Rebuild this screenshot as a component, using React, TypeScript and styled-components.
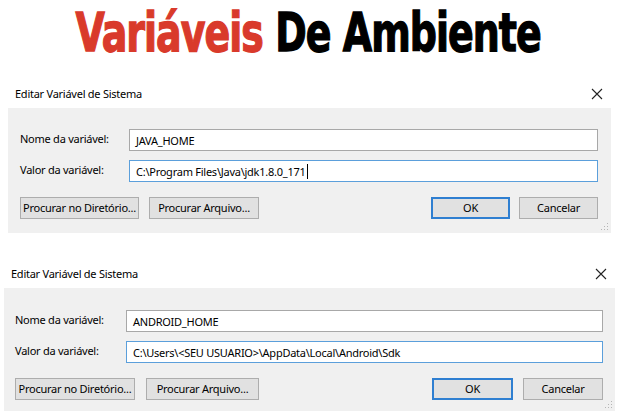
import styled, { createGlobalStyle } from 'styled-components'

const GlobalStyle = createGlobalStyle`
  html, body {
    margin: 0;
    padding: 0;
    background: #ffffff;
  }
  body {
    width: 625px;
    height: 419px;
    overflow: hidden;
    font-family: 'Noto Sans', 'Open Sans', sans-serif;
    color: #000;
  }
`

const Page = styled.div`
  display: flex;
  flex-direction: column;
  width: 625px;
`

const Header = styled.h1`
  margin: 0;
  height: 79px;
  display: flex;
  justify-content: center;
  align-items: flex-start;
  padding-right: 8px;
  box-sizing: border-box;
  overflow: visible;
`

const Headline = styled.span`
  display: inline-block;
  font-family: 'DejaVu Sans Condensed', 'DejaVu Sans', sans-serif;
  font-weight: 700;
  font-size: 54px;
  line-height: 64px;
  letter-spacing: -1.2px;
  white-space: nowrap;
  transform-origin: center center;
  transform: scaleX(0.78);
  margin-top: 1px;
  -webkit-text-stroke: 1.3px currentColor;
`

const Red = styled.span`
  color: #d93a2b;
`

const Dialog = styled.section<{ $left: number; $right: number }>`
  display: flex;
  flex-direction: column;
  margin: 0 ${(p) => p.$right}px 0 ${(p) => p.$left}px;
`

const TitleBar = styled.div<{ $height: number }>`
  height: ${(p) => p.$height}px;
  display: flex;
  align-items: center;
  justify-content: space-between;
  padding: 0 7px 0 7px;
  font-size: 11px;
  letter-spacing: -0.25px;
  color: #000;
`

const CloseButton = styled.span`
  display: flex;
  width: 14px;
  height: 14px;
  align-items: center;
  justify-content: center;
`

const Panel = styled.div<{ $pad: string }>`
  background: #f0f0f0;
  padding: ${(p) => p.$pad};
  display: flex;
  flex-direction: column;
  position: relative;
`

const Fields = styled.div<{ $labelCol: number }>`
  display: grid;
  grid-template-columns: ${(p) => p.$labelCol}px 1fr;
  row-gap: 9px;
  align-items: center;
`

const Label = styled.label`
  font-size: 11px;
  letter-spacing: -0.25px;
  padding-bottom: 4px;
  white-space: nowrap;
`

const Field = styled.div<{ $focused?: boolean }>`
  height: 22px;
  box-sizing: border-box;
  background: #ffffff;
  border: 1px solid ${(p) => (p.$focused ? '#5b9fdb' : '#a8a8a8')};
  display: flex;
  align-items: center;
  padding: 0 6px;
  font-size: 11px;
  letter-spacing: -0.25px;
  white-space: nowrap;
  overflow: hidden;
`

const Caret = styled.span`
  display: inline-block;
  width: 1px;
  height: 15px;
  background: #000;
  margin-left: 1px;
`

const Buttons = styled.div<{ $top: number }>`
  display: flex;
  margin-top: ${(p) => p.$top}px;
  justify-content: space-between;
`

const Group = styled.div<{ $gap: number }>`
  display: flex;
  gap: ${(p) => p.$gap}px;
`

const Button = styled.button<{ $w: number; $primary?: boolean }>`
  width: ${(p) => p.$w}px;
  height: 22px;
  box-sizing: border-box;
  background: #e1e1e1;
  border: ${(p) => (p.$primary ? '2px solid #2f7fd1' : '1px solid #adadad')};
  font-family: 'Noto Sans', 'Open Sans', sans-serif;
  font-size: 11px;
  letter-spacing: -0.25px;
  white-space: nowrap;
  color: #000;
  padding: 0 0 1px;
  display: flex;
  align-items: center;
  justify-content: center;
`

const Grip = styled.svg`
  position: absolute;
  right: 2px;
  bottom: 2px;
`

type DialogSpec = {
  name: string
  value: string
  caret?: boolean
  left: number
  right: number
  barHeight: number
  pad: string
  labelCol: number
  btnTop: number
  widths: [number, number, number, number]
  gapL: number
  gapR: number
}

function CloseIcon() {
  return (
    <CloseButton>
      <svg width="12" height="12" viewBox="0 0 12 12">
        <path d="M1 1 L11 11 M11 1 L1 11" stroke="#222" strokeWidth="1.1" />
      </svg>
    </CloseButton>
  )
}

function EditDialog({ spec }: { spec: DialogSpec }) {
  const [w1, w2, w3, w4] = spec.widths
  return (
    <Dialog $left={spec.left} $right={spec.right}>
      <TitleBar $height={spec.barHeight}>
        <span>Editar Variável de Sistema</span>
        <CloseIcon />
      </TitleBar>
      <Panel $pad={spec.pad}>
        <Fields $labelCol={spec.labelCol}>
          <Label>Nome da variável:</Label>
          <Field>{spec.name}</Field>
          <Label>Valor da variável:</Label>
          <Field $focused>
            {spec.value}
            {spec.caret && <Caret />}
          </Field>
        </Fields>
        <Buttons $top={spec.btnTop}>
          <Group $gap={spec.gapL}>
            <Button $w={w1}>Procurar no Diretório...</Button>
            <Button $w={w2}>Procurar Arquivo...</Button>
          </Group>
          <Group $gap={spec.gapR}>
            <Button $w={w3} $primary>
              OK
            </Button>
            <Button $w={w4}>Cancelar</Button>
          </Group>
        </Buttons>
        <Grip width="8" height="8" viewBox="0 0 8 8">
          <rect x="6" y="0" width="1" height="1" fill="#b5b5b5" />
          <rect x="3" y="3" width="1" height="1" fill="#b5b5b5" />
          <rect x="6" y="3" width="1" height="1" fill="#b5b5b5" />
          <rect x="0" y="6" width="1" height="1" fill="#b5b5b5" />
          <rect x="3" y="6" width="1" height="1" fill="#b5b5b5" />
          <rect x="6" y="6" width="1" height="1" fill="#b5b5b5" />
        </Grip>
      </Panel>
    </Dialog>
  )
}

const dialogs: DialogSpec[] = [
  {
    name: 'JAVA_HOME',
    value: 'C:\\Program Files\\Java\\jdk1.8.0_171',
    caret: true,
    left: 8,
    right: 14,
    barHeight: 29,
    pad: '21px 13px 14px 12px',
    labelCol: 109,
    btnTop: 15,
    widths: [119, 110, 79, 79],
    gapL: 10,
    gapR: 9,
  },
  {
    name: 'ANDROID_HOME',
    value: 'C:\\Users\\<SEU USUARIO>\\AppData\\Local\\Android\\Sdk',
    left: 4,
    right: 10,
    barHeight: 29,
    pad: '22px 12px 11px 11px',
    labelCol: 111,
    btnTop: 15,
    widths: [120, 113, 81, 80],
    gapL: 11,
    gapR: 10,
  },
]

const Spacer = styled.div`
  height: 26px;
`

export default function App() {
  return (
    <Page>
      <GlobalStyle />
      <Header>
        <Headline>
          <Red>Variáveis</Red> De Ambiente
        </Headline>
      </Header>
      <EditDialog spec={dialogs[0]} />
      <Spacer />
      <EditDialog spec={dialogs[1]} />
    </Page>
  )
}
